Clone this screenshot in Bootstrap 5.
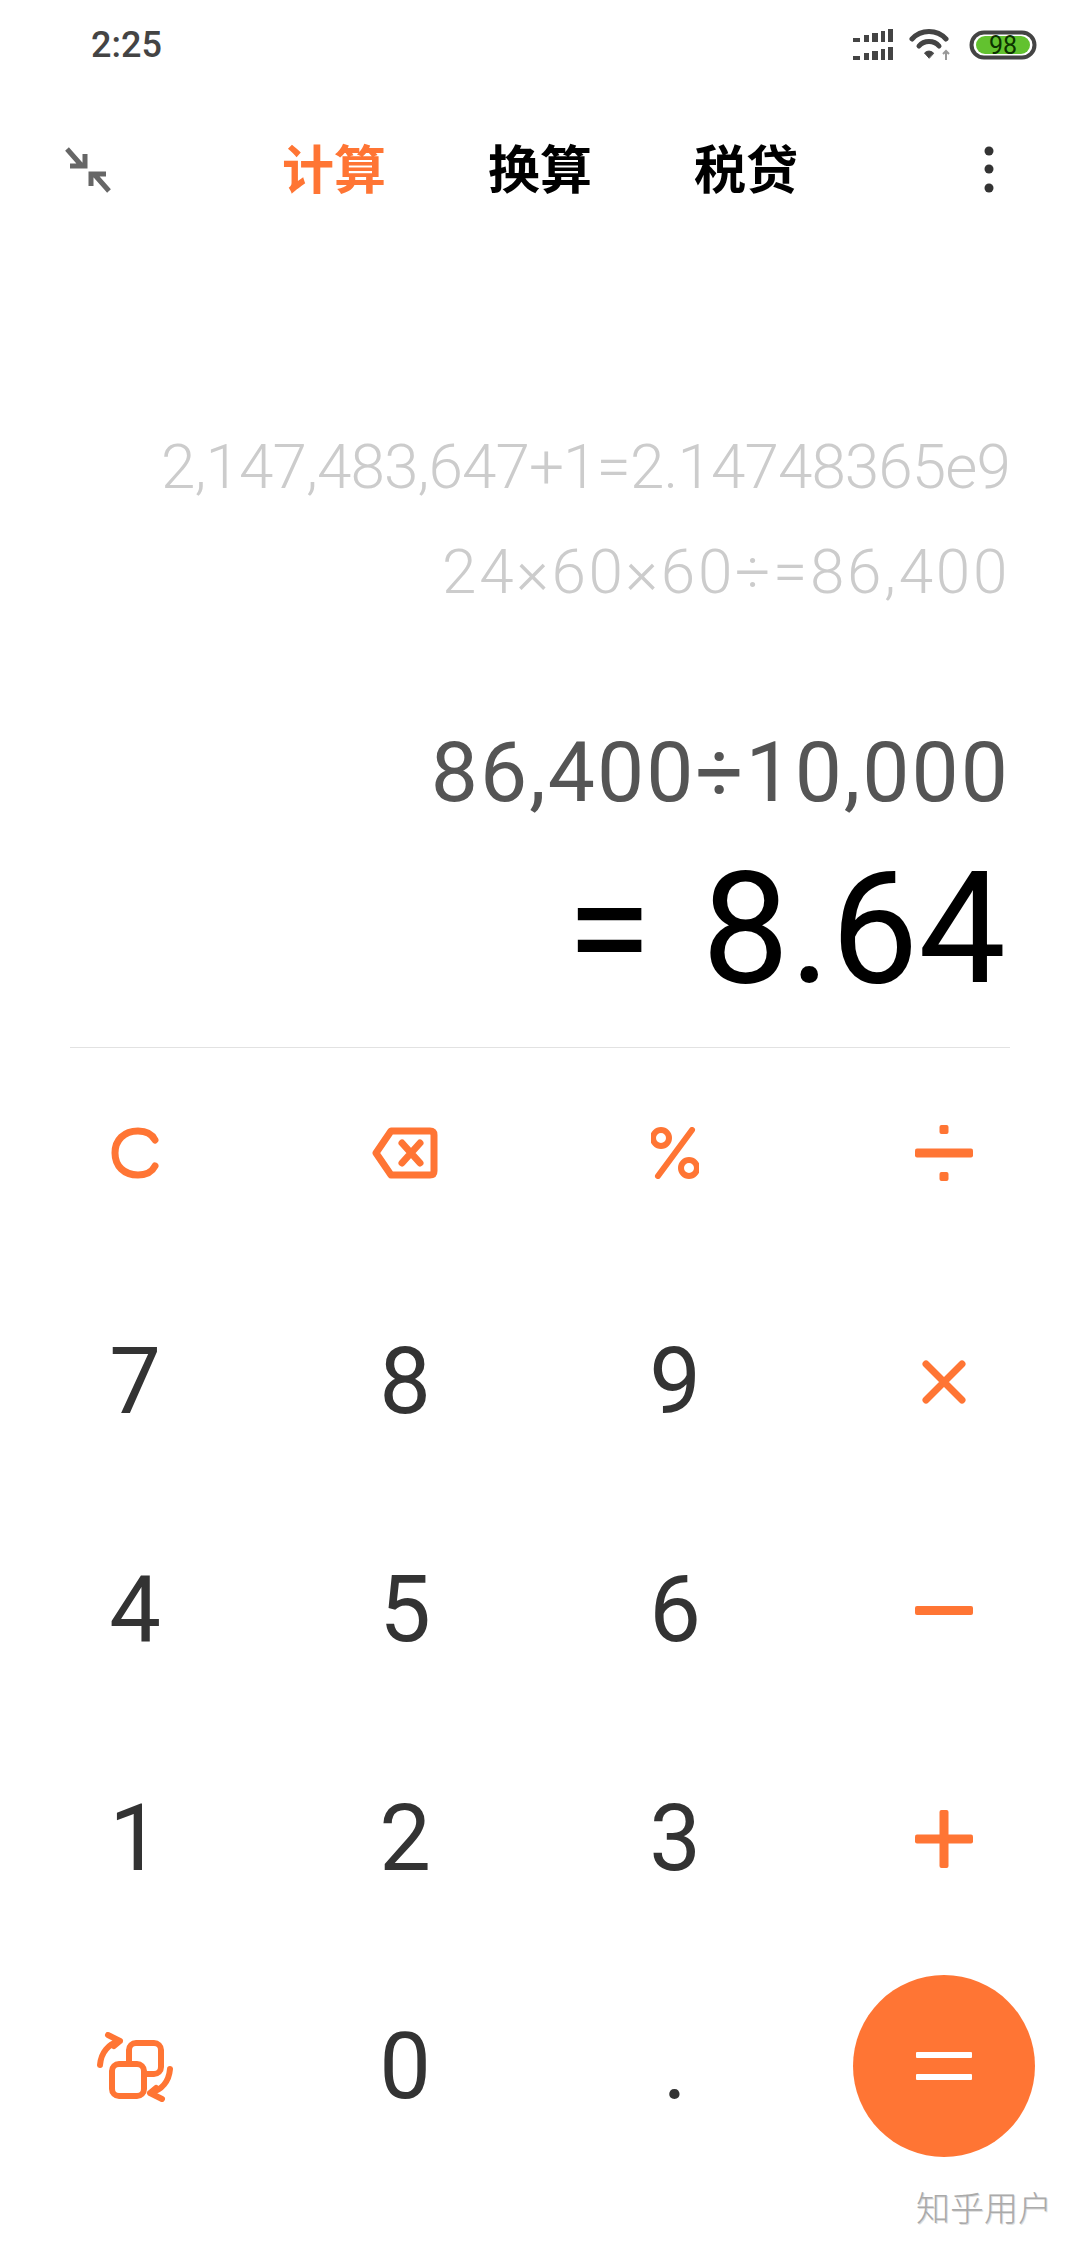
<!DOCTYPE html>
<html lang="zh-CN">
<head>
    <meta charset="UTF-8">
    <meta name="viewport" content="width=device-width, initial-scale=1.0">
    <title>计算器</title>
    <link href="https://cdn.jsdelivr.net/npm/bootstrap@5.3.0/dist/css/bootstrap.min.css" rel="stylesheet">
    <style>
        body {
            background-color: #fff;
            font-family: Roboto, "Noto Sans CJK SC", sans-serif;
        }
        .phone-page {
            width: 1080px;
            height: 2248px;
            overflow: hidden;
        }
        .status-row {
            height: 90px;
            padding: 0 43px 0 91px;
        }
        .status-time {
            font-size: 36px;
            font-weight: 500;
            color: #444;
        }
        .tab-row {
            height: 160px;
            padding: 0 64px;
        }
        .tab-link {
            font-family: "Noto Sans CJK SC", sans-serif;
            font-size: 52px;
            font-weight: 700;
            color: #000;
            line-height: 1;
        }
        .tab-link.is-active {
            color: #ff7534;
        }
        .tab-list {
            gap: 102px;
            margin-bottom: 6px;
        }
        .display-panel {
            padding: 164px 70px 0;
            text-align: right;
        }
        .history-line {
            font-size: 62px;
            font-weight: 300;
            line-height: 105px;
            color: #ccc;
        }
        .history-long {
            letter-spacing: -0.9px;
        }
        .history-short {
            letter-spacing: 2.7px;
        }
        .expr-line {
            font-size: 84px;
            letter-spacing: 2px;
            line-height: 110px;
            color: #555;
            margin-top: 94px;
        }
        .result-line {
            font-size: 156px;
            line-height: 170px;
            color: #000;
            margin-top: 16px;
            padding-right: 4px;
        }
        .result-eq {
            margin-right: 50px;
        }
        .display-rule {
            height: 1px;
            background-color: #e2e2e2;
            margin: 33px 70px 0;
        }
        .key-pad {
            margin-top: -9px;
        }
        .calc-key {
            height: 228.5px;
            font-size: 92px;
            color: #333;
        }
        .key-end {
            padding-right: 3px;
        }
        .equal-btn {
            width: 182px;
            height: 182px;
            margin-top: -2px;
            background-color: #ff7534;
            border: 0;
        }
        .watermark {
            right: 28px;
            top: 2187px;
            font-family: "Noto Sans CJK SC", sans-serif;
            font-size: 34px;
            font-weight: 300;
            line-height: 40px;
            color: #aaa;
            text-shadow: 1px 1px 0 #ddd;
        }
    </style>
</head>
<body>
    <div class="phone-page position-relative">
        <!-- 状态栏 -->
        <div class="status-row d-flex align-items-center justify-content-between">
            <span class="status-time">2:25</span>
            <div class="d-flex align-items-center gap-3">
                <svg width="40" height="32" viewBox="0 0 40 32" fill="#444">
                    <rect x="0" y="9" width="7" height="4"/><rect x="11" y="6" width="5" height="7"/><rect x="19" y="4" width="6" height="9"/><rect x="28" y="2" width="4" height="11"/><rect x="35" y="0" width="5" height="13"/>
                    <rect x="0" y="27" width="7" height="4"/><rect x="11" y="24" width="5" height="7"/><rect x="19" y="22" width="6" height="9"/><rect x="28" y="20" width="4" height="11"/><rect x="35" y="18" width="5" height="13"/>
                </svg>
                <svg width="44" height="32" viewBox="0 0 44 32" fill="none" stroke="#444" stroke-width="5" stroke-linecap="round">
                    <path d="M3 10C12 0 28 0 37 10"/>
                    <path d="M10 17C15 11 25 11 30 17"/>
                    <path d="M20 29l-4.500-5a6 6 0 0 1 9 0z" fill="#444" stroke-width="1"/>
                    <path d="M37 31V22M34 25l3-3 3 3" stroke="#999" stroke-width="2" stroke-linecap="butt"/>
                </svg>
                <svg width="68" height="30" viewBox="0 0 68 30">
                    <rect x="2.500" y="2.500" width="63" height="25" rx="12.500" fill="#fff" stroke="#444" stroke-width="4"/>
                    <rect x="7" y="6" width="54" height="18" rx="9" fill="#62c22f"/>
                    <text x="34" y="23.500" text-anchor="middle" font-family="Roboto, sans-serif" font-size="25" fill="#0c3200">98</text>
                </svg>
            </div>
        </div>

        <!-- 顶部标签 -->
        <div class="tab-row d-flex align-items-center justify-content-between">
            <svg width="48" height="48" viewBox="0 0 48 48" fill="none" stroke="#666" stroke-width="5">
                <path d="M3 3L18 20M21 8V20H6"/>
                <path d="M45 45L30 28M27 40V28H42"/>
            </svg>
            <div class="tab-list d-flex">
                <a class="tab-link is-active text-decoration-none" href="#">计算</a>
                <a class="tab-link text-decoration-none" href="#">换算</a>
                <a class="tab-link text-decoration-none" href="#">税贷</a>
            </div>
            <svg width="48" height="48" viewBox="0 0 48 48" fill="#333">
                <circle cx="21" cy="5" r="4.500"/><circle cx="21" cy="23" r="4.500"/><circle cx="21" cy="42" r="4.500"/>
            </svg>
        </div>

        <!-- 显示区 -->
        <div class="display-panel">
            <div class="history-line history-long">2,147,483,647+1=2.14748365e9</div>
            <div class="history-line history-short">24×60×60÷=86,400</div>
            <div class="expr-line">86,400÷10,000</div>
            <div class="result-line"><span class="result-eq">=</span>8.64</div>
        </div>
        <div class="display-rule"></div>

        <!-- 键盘 -->
        <div class="key-pad row g-0">
            <div class="col-3 calc-key d-flex align-items-center justify-content-center">
                <svg width="48" height="52" viewBox="0 0 48 52" fill="none" stroke="#ff7534" stroke-width="7" stroke-linecap="round">
                    <path d="M44 13C41 7 35 4 27 4C13 4 4 13 4 26C4 39 13 48 27 48C35 48 41 45 44 39"/>
                </svg>
            </div>
            <div class="col-3 calc-key d-flex align-items-center justify-content-center">
                <svg width="66" height="52" viewBox="0 0 66 52" fill="none" stroke="#ff7534" stroke-width="7" stroke-linejoin="round" stroke-linecap="round">
                    <path d="M19 4H58Q62 4 62 8V44Q62 48 58 48H19L4 26Z"/>
                    <path d="M30 16L48 36M48 16L30 36"/>
                </svg>
            </div>
            <div class="col-3 calc-key d-flex align-items-center justify-content-center">
                <svg width="48" height="52" viewBox="0 0 48 52" fill="none" stroke="#ff7534" stroke-width="6" stroke-linecap="round">
                    <circle cx="10" cy="11" r="8"/>
                    <circle cx="38" cy="41" r="8"/>
                    <path d="M41 3L7 49"/>
                </svg>
            </div>
            <div class="col-3 calc-key key-end d-flex align-items-center justify-content-center">
                <svg width="58" height="56" viewBox="0 0 58 56" fill="#ff7534">
                    <rect x="0" y="23.500" width="58" height="9" rx="2"/>
                    <rect x="24.500" y="0" width="9" height="9" rx="2"/>
                    <rect x="24.500" y="47" width="9" height="9" rx="2"/>
                </svg>
            </div>

            <div class="col-3 calc-key d-flex align-items-center justify-content-center">7</div>
            <div class="col-3 calc-key d-flex align-items-center justify-content-center">8</div>
            <div class="col-3 calc-key d-flex align-items-center justify-content-center">9</div>
            <div class="col-3 calc-key key-end d-flex align-items-center justify-content-center">
                <svg width="44" height="44" viewBox="0 0 44 44" fill="none" stroke="#ff7534" stroke-width="7" stroke-linecap="round">
                    <path d="M4 4L40 40M40 4L4 40"/>
                </svg>
            </div>

            <div class="col-3 calc-key d-flex align-items-center justify-content-center">4</div>
            <div class="col-3 calc-key d-flex align-items-center justify-content-center">5</div>
            <div class="col-3 calc-key d-flex align-items-center justify-content-center">6</div>
            <div class="col-3 calc-key key-end d-flex align-items-center justify-content-center">
                <svg width="58" height="9" viewBox="0 0 58 9" fill="#ff7534"><rect width="58" height="9" rx="2"/></svg>
            </div>

            <div class="col-3 calc-key d-flex align-items-center justify-content-center">1</div>
            <div class="col-3 calc-key d-flex align-items-center justify-content-center">2</div>
            <div class="col-3 calc-key d-flex align-items-center justify-content-center">3</div>
            <div class="col-3 calc-key key-end d-flex align-items-center justify-content-center">
                <svg width="58" height="58" viewBox="0 0 58 58" fill="#ff7534">
                    <rect x="0" y="24.500" width="58" height="9" rx="2"/>
                    <rect x="24.500" y="0" width="9" height="58" rx="2"/>
                </svg>
            </div>

            <div class="col-3 calc-key d-flex align-items-center justify-content-center">
                <svg width="76" height="70" viewBox="0 0 76 70" fill="none" stroke="#ff7534" stroke-width="6" stroke-linecap="round" stroke-linejoin="round">
                    <rect x="32" y="11" width="32" height="31" rx="7"/>
                    <rect x="15" y="32" width="32" height="32" rx="7" fill="#fff"/>
                    <path d="M3 33C4 21 11 12 23 9M11 3L23 9L17 14" />
                    <path d="M73 37C72 49 65 58 53 61M65 67L53 61L59 56"/>
                </svg>
            </div>
            <div class="col-3 calc-key d-flex align-items-center justify-content-center">0</div>
            <div class="col-3 calc-key d-flex align-items-center justify-content-center">.</div>
            <div class="col-3 calc-key key-end d-flex align-items-center justify-content-center">
                <button class="equal-btn btn rounded-circle d-flex align-items-center justify-content-center p-0" type="button">
                    <svg width="56" height="28" viewBox="0 0 56 28" fill="#fff">
                        <rect width="56" height="6" rx="1"/><rect y="22" width="56" height="6" rx="1"/>
                    </svg>
                </button>
            </div>
        </div>

        <div class="watermark position-absolute">知乎用户</div>
    </div>

    <script src="https://cdn.jsdelivr.net/npm/bootstrap@5.3.0/dist/js/bootstrap.bundle.min.js"></script>
</body>
</html>
